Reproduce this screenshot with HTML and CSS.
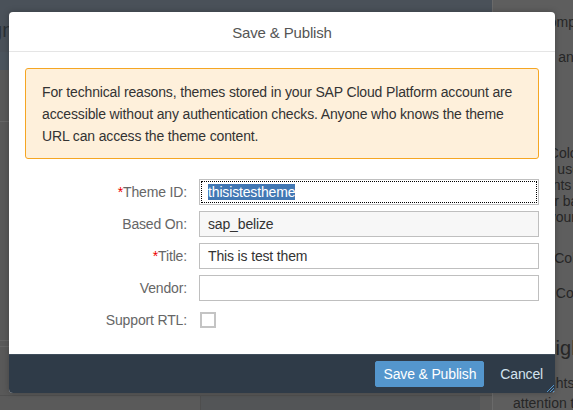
FILE: index.html
```html
<!DOCTYPE html>
<html>
<head>
    <title>Save & Publish</title>
    <meta charset="UTF-8">
    <link rel="stylesheet" href="styles.css">
</head>
<body>
    <div class="page">
        <div class="main">
            <div class="shell"><span class="shell-title">Design</span></div>
            <div class="subbar"></div>
            <div class="work">
                <div class="work-head"></div>
                <div class="work-body"></div>
                <div class="work-band"></div>
                <div class="work-fill"></div>
                <div class="table-foot">
                    <div class="col-a"></div>
                    <div class="col-b"></div>
                    <div class="col-c"></div>
                </div>
            </div>
        </div>
        <aside class="side">
            <p class="side-p1">Use components</p>
            <p class="side-p2">Set for any</p>
            <p class="side-p3">Base Colors<br>Colors used<br>Edit fonts<br>Header backgrounds<br>Save your</p>
            <p class="side-p4">Brand Color</p>
            <p class="side-p5">Group Colors</p>
            <h3 class="side-heading">Highlights</h3>
            <p class="side-p6">Highlights<br>attention to</p>
        </aside>
    </div>

    <div class="dialog">
        <header class="dialog-header">Save &amp; Publish</header>
        <div class="dialog-body">
            <div class="message">
                For technical reasons, themes stored in your SAP Cloud Platform account are accessible without any authentication checks. Anyone who knows the theme URL can access the theme content.
            </div>
            <div class="form">
                <label class="label required">Theme ID:</label>
                <div class="field focused"><span class="selection">thisistestheme</span></div>

                <label class="label">Based On:</label>
                <div class="field readonly">sap_belize</div>

                <label class="label required">Title:</label>
                <div class="field">This is test them</div>

                <label class="label">Vendor:</label>
                <div class="field"></div>

                <label class="label">Support RTL:</label>
                <div><span class="checkbox"></span></div>
            </div>
        </div>
        <footer class="dialog-footer">
            <button class="btn btn-primary">Save &amp; Publish</button>
            <button class="btn btn-plain">Cancel</button>
            <svg class="grip" width="8" height="8" viewBox="0 0 8 8">
                <path d="M8 1 L1 8 M8 4 L4 8 M8 7 L7 8" stroke="#5496cd" stroke-width="1"/>
            </svg>
        </footer>
    </div>
</body>
</html>
```

FILE: styles.css
```css
body {
    margin: 0;
    font-family: "Liberation Sans", Arial, sans-serif;
    font-size: 14px;
    background: #595959;
    overflow: hidden;
}
.page {
    display: flex;
    height: 410px;
}
.main {
    flex: 1;
    display: flex;
    flex-direction: column;
    min-width: 0;
}
.shell {
    height: 52px;
    background: #4a5159;
    display: flex;
    align-items: center;
    padding-top: 8px;
    box-sizing: border-box;
    overflow: hidden;
}
.shell-title {
    font-size: 20px;
    color: #2a3036;
    margin-left: -49px;
}
.subbar {
    height: 18px;
    background: #4b545d;
}
.work {
    flex: 1;
    display: flex;
    flex-direction: column;
}
.work-head {
    height: 51px;
    border-bottom: 1px solid #676767;
}
.work-body {
    flex: 1;
}
.work-band {
    height: 5px;
    border-top: 1px solid #646464;
    border-bottom: 1px solid #646464;
}
.work-fill {
    height: 48px;
}
.table-foot {
    height: 14px;
    border-top: 1px solid #505050;
    display: grid;
    grid-template-columns: 200px 280px 1fr;
}
.col-a {
    background: #5a5a5a;
}
.col-b {
    background: #535557;
    border-left: 1px solid #4e4e4e;
}
.col-c {
    background: #5b5b5b;
}
.side {
    width: 81px;
    box-sizing: border-box;
    background: #5e5e5e;
    border-left: 1px solid #6a6a6a;
    padding: 14px 0 0 20px;
    white-space: nowrap;
    overflow: hidden;
    color: #262626;
    line-height: 16px;
}
.side p,
.side h3 {
    margin: 0;
}
.side .side-p2 { margin-top: 19px; }
.side .side-p3 { margin-top: 80px; }
.side .side-p4 { margin-top: 25px; }
.side .side-p5 { margin-top: 19px; }
.side .side-heading {
    margin-top: 35px;
    margin-left: -3px;
    font-size: 20px;
    font-weight: normal;
    line-height: 24px;
}
.side .side-p6 {
    margin-top: 13px;
    line-height: 20px;
}

/* dialog */
.dialog {
    position: absolute;
    top: 12px;
    left: 9px;
    width: 546px;
    background: #fff;
    border-radius: 4px;
    box-shadow: 0 0 6px rgba(0, 0, 0, 0.25);
    overflow: hidden;
    letter-spacing: -0.15px;
}
.dialog-header {
    height: 40px;
    padding-top: 2px;
    box-sizing: border-box;
    border-bottom: 1px solid #e5e5e5;
    display: flex;
    align-items: center;
    justify-content: center;
    font-size: 15px;
    color: #555;
}
.dialog-body {
    padding: 16px 16px 21px;
}
.message {
    border: 1px solid #f5a623;
    background: #fef0db;
    border-radius: 3px;
    padding: 12px 16px 11px;
    line-height: 22px;
    color: #333;
}
.form {
    margin-top: 20px;
    display: grid;
    grid-template-columns: 162px 1fr;
    grid-auto-rows: 26px;
    column-gap: 12px;
    row-gap: 6px;
    align-items: center;
}
.label {
    text-align: right;
    color: #666;
}
.required::before {
    content: "*";
    color: #e00;
}
.field {
    height: 26px;
    box-sizing: border-box;
    border: 1px solid #bfbfbf;
    background: #fff;
    padding: 0 8px;
    display: flex;
    align-items: center;
    color: #333;
}
.field.focused {
    outline: 1px dotted #000;
    outline-offset: -3px;
}
.field.readonly {
    background: #f7f7f7;
}
.selection {
    background: #4278b4;
    color: #fff;
    line-height: 16px;
}
.checkbox {
    display: block;
    width: 16px;
    height: 16px;
    margin-left: 1px;
    box-sizing: border-box;
    border: 2px solid #c4c4c4;
    background: #fff;
}
.dialog-footer {
    position: relative;
    height: 39px;
    box-sizing: border-box;
    background: #2f3b48;
    border-top: 1px solid #3f4d5b;
    display: flex;
    justify-content: flex-end;
    align-items: center;
    gap: 8px;
    padding: 0 4px;
}
.btn {
    height: 26px;
    box-sizing: border-box;
    padding: 0 7px;
    font-family: inherit;
    font-size: 14px;
    letter-spacing: inherit;
    border-radius: 2px;
    cursor: pointer;
}
.btn-primary {
    background: #5496cd;
    border: 1px solid #5496cd;
    color: #fff;
}
.btn-plain {
    background: transparent;
    border: 1px solid transparent;
    color: #d3e2ee;
}
.grip {
    position: absolute;
    right: 1px;
    bottom: 1px;
}
```
